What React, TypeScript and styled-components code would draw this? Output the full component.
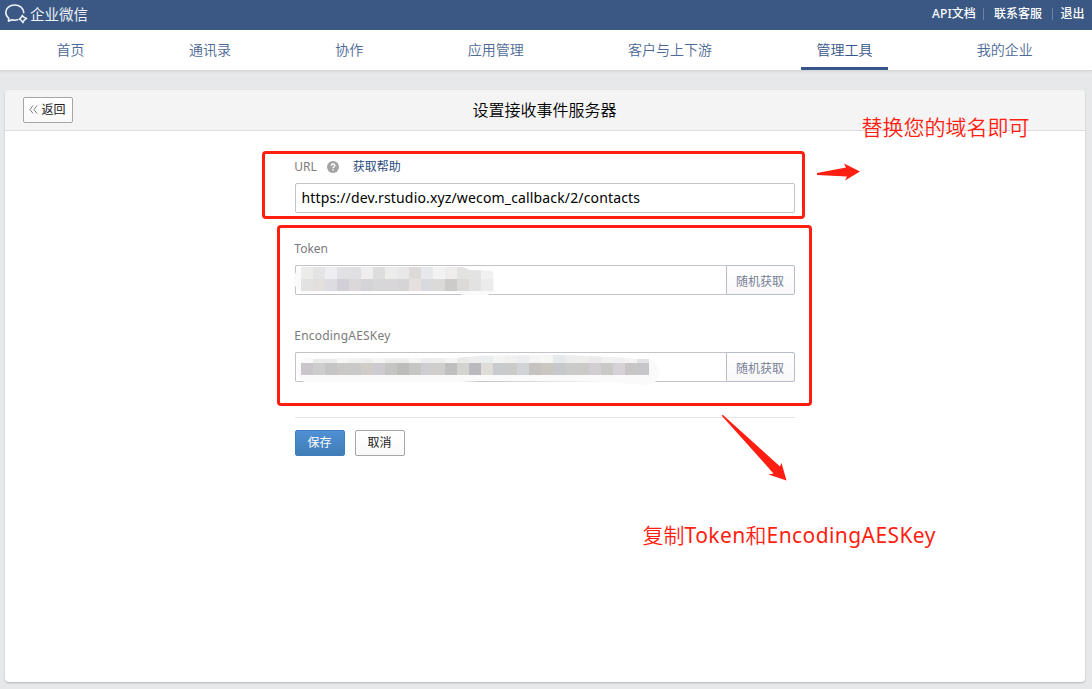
import React from "react";
import styled, { createGlobalStyle } from "styled-components";

const GlobalStyle = createGlobalStyle`
  * { box-sizing: border-box; }
  html, body { margin: 0; padding: 0; }
  body {
    background: #e7e8ea;
    font-family: "Noto Sans", "Noto Sans CJK SC", sans-serif;
    font-size: 12px;
    color: #222;
  }
`;

const Page = styled.div`
  position: relative;
  width: 1092px;
  height: 689px;
  overflow: hidden;
  display: flex;
  flex-direction: column;
`;

const TopBar = styled.header`
  height: 30px;
  flex: none;
  background: #3a5883;
  color: #fff;
  display: flex;
  align-items: center;
  justify-content: space-between;
  padding: 0 7.5px 2px 4px;
`;

const Brand = styled.div`
  display: flex;
  align-items: center;
  gap: 2px;
  font-size: 14.5px;
  line-height: 20px;
  color: #eef2f8;
`;

const TopLinks = styled.nav`
  display: flex;
  align-items: center;
  line-height: 18px;
  font-weight: 500;
`;

const TopLink = styled.a<{ $before?: number; $after?: number; $tracking?: number }>`
  margin-left: ${(p) => p.$before ?? 0}px;
  margin-right: ${(p) => p.$after ?? 0}px;
  letter-spacing: ${(p) => p.$tracking ?? 0}px;
  white-space: nowrap;
`;

const Divider = styled.span`
  width: 1px;
  height: 12px;
  background: #6c83a4;
`;

const NavBar = styled.nav`
  height: 41px;
  flex: none;
  background: #fff;
  border-bottom: 1px solid #d5d7d9;
  box-shadow: 0 1px 2px rgba(0, 0, 0, 0.07);
  display: flex;
  gap: 73.4px;
  padding-left: 41.5px;
`;

const NavItem = styled.a<{ $active?: boolean }>`
  height: 40px;
  padding: 0 16px 0 15px;
  font-size: 14px;
  font-weight: 350;
  line-height: 39px;
  white-space: nowrap;
  color: ${(p) => (p.$active ? "#35558a" : "#4d6995")};
  border-bottom: 3px solid ${(p) => (p.$active ? "#35568a" : "transparent")};
`;

const Card = styled.main`
  width: 1080px;
  height: 592px;
  margin: 19px 0 0 5px;
  background: #fff;
  border-radius: 4px;
  box-shadow: 0 1px 2px rgba(0, 0, 0, 0.22);
`;

const CardHeader = styled.div`
  height: 41px;
  display: grid;
  grid-template-columns: 1fr auto 1fr;
  align-items: center;
  padding: 0 19px 0 18px;
  background: #f4f4f4;
  border-bottom: 1px solid #dcdde4;
  border-radius: 4px 4px 0 0;
`;

const CardTitle = styled.h1`
  margin: 0;
  font-size: 16px;
  font-weight: 350;
  line-height: 24px;
  color: #000;
`;

const Button = styled.button<{ $primary?: boolean }>`
  width: 50px;
  height: 26px;
  padding: 0 1px 1px 0;
  display: flex;
  align-items: center;
  justify-content: center;
  gap: 3px;
  font-family: inherit;
  font-size: 12px;
  line-height: 18px;
  color: ${(p) => (p.$primary ? "#fff" : "#222")};
  background: ${(p) => (p.$primary ? "linear-gradient(#4f90d5, #417db5)" : "linear-gradient(#fff, #f9f9f9)")};
  border: 1px solid ${(p) => (p.$primary ? "#3d7fc2" : "#a6a6a8")};
  border-radius: 2px;
`;

const Form = styled.form`
  width: 500px;
  margin-left: 290px;
  padding-top: 27px;
  display: flex;
  flex-direction: column;
`;

const Field = styled.div<{ $space: number }>`
  display: flex;
  flex-direction: column;
  margin-bottom: ${(p) => p.$space}px;
`;

const Label = styled.label<{ $tracking?: number }>`
  height: 18px;
  margin: 0 0 7px -0.7px;
  display: flex;
  align-items: center;
  font-size: 12px;
  line-height: 18px;
  color: #7b7b7b;
  letter-spacing: ${(p) => p.$tracking ?? 0}px;
`;

const HelpMark = styled.svg`
  margin: 0 14px 0 10px;
`;

const HelpLink = styled.a`
  color: #2b4b7d;
`;

const InputRow = styled.div`
  position: relative;
  display: flex;
  height: 30px;
`;

const InputBox = styled.div<{ $joined?: boolean }>`
  flex: 1;
  padding: 0 5.5px;
  font-size: 14px;
  line-height: 27px;
  letter-spacing: 0.15px;
  color: #000;
  border: 1px solid #c3c3c6;
  border-right-width: ${(p) => (p.$joined ? 0 : 1)}px;
  border-radius: ${(p) => (p.$joined ? "2px 0 0 2px" : "2px")};
`;

const RandomButton = styled.button`
  width: 69px;
  padding: 1px 1px 0 0;
  font-family: inherit;
  font-size: 12px;
  color: #787f98;
  background: linear-gradient(#fff, #f8f8f8);
  border: 1px solid #b6bccb;
  border-radius: 0 2px 2px 0;
`;

const Mosaic = styled.svg`
  position: absolute;
  left: -5px;
  top: -4px;
`;

const Actions = styled.div`
  display: flex;
  gap: 10px;
  padding-top: 12px;
  border-top: 1px solid #e3e3e3;
`;

const Highlight = styled.div<{ $x: number; $y: number; $w: number; $h: number }>`
  position: absolute;
  left: ${(p) => p.$x}px;
  top: ${(p) => p.$y}px;
  width: ${(p) => p.$w}px;
  height: ${(p) => p.$h}px;
  border: 3px solid #ff1e12;
  border-radius: 4px;
`;

const Note = styled.div<{ $x: number; $y: number }>`
  position: absolute;
  left: ${(p) => p.$x}px;
  top: ${(p) => p.$y}px;
  font-size: 21px;
  font-weight: 350;
  line-height: 30px;
  white-space: nowrap;
  color: #ff1e12;
`;

const Latin = styled.span`
  font-weight: 400;
  letter-spacing: 0.42px;
`;

const Arrows = styled.svg`
  position: absolute;
  left: 700px;
  top: 150px;
`;

const tokenRows = [
  ["#ebebea", "#e5e4e4", "#eeedf1", "#e1e0e4", "#e0e0e3", "#efeeed", "#dedddd", "#ececeb", "#e9e8e8", "#dedada", "#e6e8eb", "#f2f2f2", "#eeedeb", "#e2e2e1", "#e4e3e3", "#f1f1f1"],
  ["#e3e2e2", "#e2dfdc", "#dddce0", "#d2d0d6", "#dcd8d9", "#d4d3d8", "#d7d6d9", "#d8d6d8", "#d6d4d7", "#e5e0dd", "#d9dadd", "#dcdad9", "#cdcbc9", "#dbdad8", "#e3e2e2", "#ebebeb"],
];

const keyTop = ["#fafafa", "#ebecea", "#ebecea", "#f6f6f5", "#f1f1f1", "#efefee", "#f5f5f5", "#ededec", "#ededec", "#f5f5f5", "#ebecee", "#eeeeed", "#f5f5f5", "#e9eae7", "#ededed", "#e9edee", "#f4f4f3", "#f1f1f0", "#ededef", "#f4f4f4", "#f6f6f4", "#e6e9eb", "#ededee", "#eeeeed", "#eaeaec", "#f1f1f0", "#efeff1", "#f4f4f4", "#e3e3e4"];

const keyMain = ["#cac5cb", "#cdcdcd", "#c6c5c6", "#c9c8c5", "#c9c9c9", "#d2ccc9", "#cdcbcf", "#c5c5c3", "#bcbcba", "#c5c5c3", "#cecdcf", "#cfcecd", "#bfbfbf", "#d3d4cf", "#bab9bd", "#e0ddd8", "#c8cbce", "#cccac9", "#d1d3d6", "#c6c2bf", "#cac7c1", "#c5c9cb", "#cbcbca", "#cbcac8", "#d1cfd1", "#c9c9c7", "#d5d1d7", "#c7c6c4", "#c6c5c7"];

function TokenMosaic() {
  return (
    <Mosaic width="210" height="38" viewBox="290 261 210 38">
      <defs>
        <clipPath id="tokenClip">
          <path d="M300 267H462L470 270L493 271V291H300Z" />
        </clipPath>
      </defs>
      <path d="M303 267H462L468 270H490L494 276L495 291L488 295L463 295L455 292H302Q294 289 294 280Q294 269 303 267Z" fill="#fafafa" />
      <g clipPath="url(#tokenClip)" shapeRendering="crispEdges">
        {tokenRows.map((row, r) =>
          row.map((c, i) => <rect key={`${r}-${i}`} x={301 + i * 12} y={267 + r * 12} width="12" height="12" fill={c} />),
        )}
      </g>
    </Mosaic>
  );
}

function KeyMosaic() {
  const outline = "M304 358L456 358L480 355L556 354L612 357L640 359L652 360Q659 364 659 374Q658 384 646 385L630 384L610 382L480 381L460 382L304 382Q297 377 297 370Q297 361 304 358Z";
  return (
    <Mosaic width="376" height="40" viewBox="290 348 376 40">
      <defs>
        <clipPath id="keyClip">
          <path d="M304 359L456 358L480 356L556 355L612 357L640 359H649V363H301Z" />
        </clipPath>
      </defs>
      <path d={outline} fill="#fafafa" />
      <g clipPath="url(#keyClip)" shapeRendering="crispEdges">
        {keyTop.map((c, i) => <rect key={i} x={301 + i * 12} y={351} width="12" height="12" fill={c} />)}
      </g>
      <g shapeRendering="crispEdges">
        {keyMain.map((c, i) => <rect key={i} x={301 + i * 12} y={363} width="12" height="12" fill={c} />)}
      </g>
    </Mosaic>
  );
}

function Logo() {
  return (
    <svg width="24" height="24" viewBox="4 2 24 24" fill="none" stroke="#eef2f8" strokeWidth="1.6" strokeLinecap="round" strokeLinejoin="round">
      <path d="M23.8 12.6C23.6 8.200 19.600 5 14.800 5C9.600 5 5.800 8.400 5.800 12.600C5.800 15.100 7 17 8.800 18.300L8.400 21.200L11.700 19.700C13.700 20.300 16 20.300 17.600 19.800" />
      <path d="M22.300 15.400L24 17.300L26.600 18.400L24.200 20.200L22.900 22.700L21.400 20.400L19.200 19.200L21.300 17.400Z" strokeWidth="1.500" />
    </svg>
  );
}

export default function App() {
  return (
    <Page>
      <GlobalStyle />
      <TopBar>
        <Brand>
          <Logo />
          企业微信
        </Brand>
        <TopLinks>
          <TopLink $after={7} $tracking={0.1}>API文档</TopLink>
          <Divider />
          <TopLink $before={10} $after={10.5}>联系客服</TopLink>
          <Divider />
          <TopLink $before={7}>退出</TopLink>
        </TopLinks>
      </TopBar>
      <NavBar>
        <NavItem>首页</NavItem>
        <NavItem>通讯录</NavItem>
        <NavItem>协作</NavItem>
        <NavItem>应用管理</NavItem>
        <NavItem>客户与上下游</NavItem>
        <NavItem $active>管理工具</NavItem>
        <NavItem>我的企业</NavItem>
      </NavBar>
      <Card>
        <CardHeader>
          <Button>
            <svg width="9" height="9" viewBox="0 0 9 9" fill="none" stroke="#808080" strokeWidth="1">
              <path d="M4 .5L1 4.500L4 8.500M8 .5L5 4.500L8 8.500" />
            </svg>
            返回
          </Button>
          <CardTitle>设置接收事件服务器</CardTitle>
        </CardHeader>
        <Form>
          <Field $space={27}>
            <Label>
              URL
              <HelpMark width="12" height="12" viewBox="0 0 12 12">
                <circle cx="6" cy="6" r="6" fill="#a3a3a3" />
                <path d="M4.200 4.700C4.200 2.500 7.800 2.500 7.800 4.600C7.800 5.900 6 5.900 6 7.300" fill="none" stroke="#fff" strokeWidth="1.400" />
                <rect x="5.300" y="8.200" width="1.400" height="1.400" fill="#fff" />
              </HelpMark>
              <HelpLink>获取帮助</HelpLink>
            </Label>
            <InputRow>
              <InputBox>https://dev.rstudio.xyz/wecom_callback/2/contacts</InputBox>
            </InputRow>
          </Field>
          <Field $space={32}>
            <Label>Token</Label>
            <InputRow>
              <InputBox $joined />
              <RandomButton type="button">随机获取</RandomButton>
              <TokenMosaic />
            </InputRow>
          </Field>
          <Field $space={35}>
            <Label $tracking={0.2}>EncodingAESKey</Label>
            <InputRow>
              <InputBox $joined />
              <RandomButton type="button">随机获取</RandomButton>
              <KeyMosaic />
            </InputRow>
          </Field>
          <Actions>
            <Button type="button" $primary>保存</Button>
            <Button type="button">取消</Button>
          </Actions>
        </Form>
      </Card>
      <Highlight $x={262} $y={151} $w={543} $h={68} />
      <Highlight $x={277} $y={225} $w={535} $h={181} />
      <Arrows width="170" height="340" viewBox="700 150 170 340" fill="#ff1e12">
        <path d="M817 173L846 167.500L844 163.500L860 171.500L845 180.500L847 176.500L817 175Z" />
        <path d="M721.500 415.500L723 415L780 466.500L781.500 463L786.500 480.500L768.500 474.500L773.500 473.500L753 450.500Z" />
      </Arrows>
      <Note $x={861.5} $y={112}>替换您的域名即可</Note>
      <Note $x={642.5} $y={520}>复制<Latin>Token</Latin>和<Latin>EncodingAESKey</Latin></Note>
    </Page>
  );
}
